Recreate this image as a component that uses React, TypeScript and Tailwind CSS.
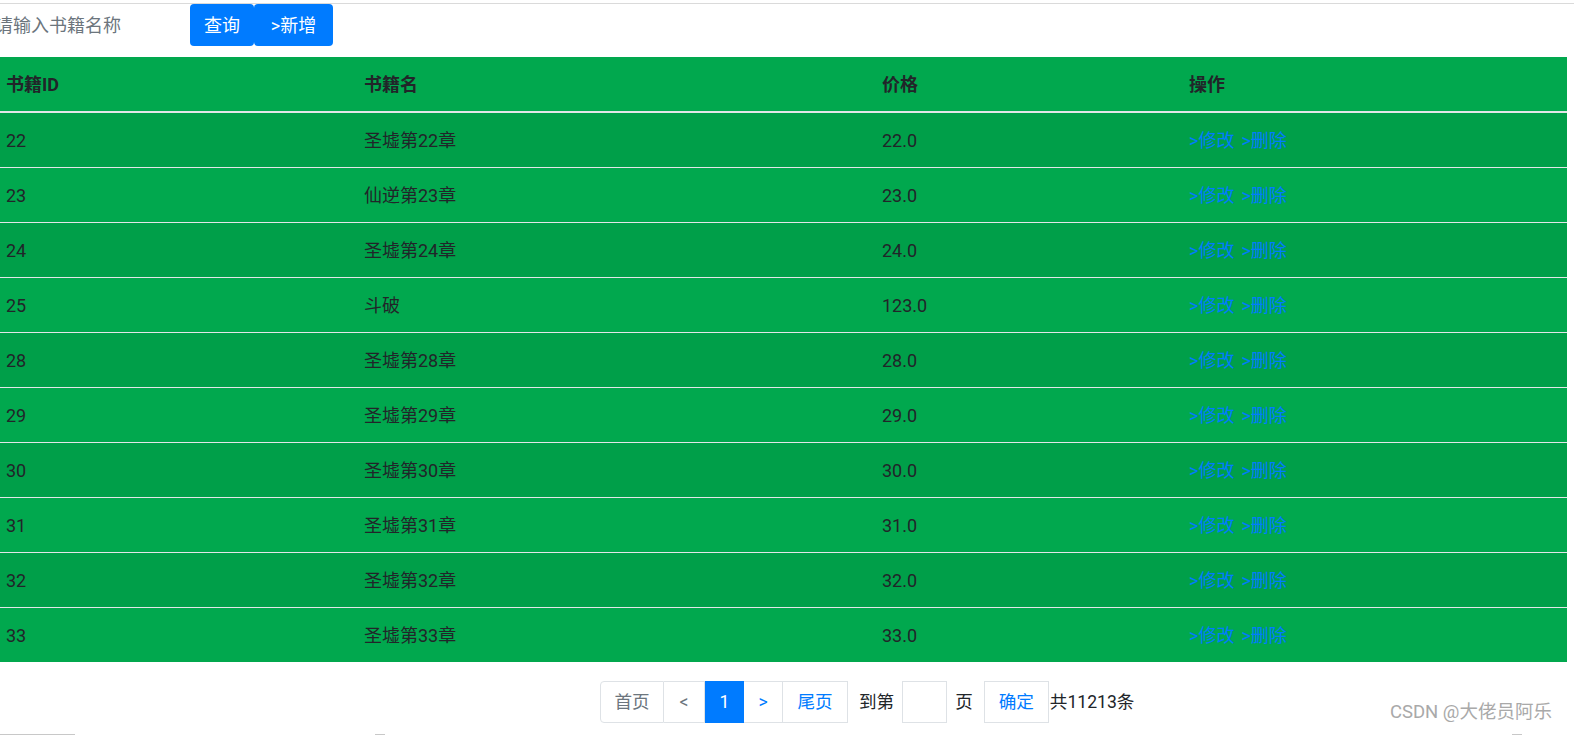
const rows = [
  { id: 22, name: '圣墟第22章', price: '22.0' },
  { id: 23, name: '仙逆第23章', price: '23.0' },
  { id: 24, name: '圣墟第24章', price: '24.0' },
  { id: 25, name: '斗破', price: '123.0' },
  { id: 28, name: '圣墟第28章', price: '28.0' },
  { id: 29, name: '圣墟第29章', price: '29.0' },
  { id: 30, name: '圣墟第30章', price: '30.0' },
  { id: 31, name: '圣墟第31章', price: '31.0' },
  { id: 32, name: '圣墟第32章', price: '32.0' },
  { id: 33, name: '圣墟第33章', price: '33.0' },
];

const font = "font-['Roboto','Noto_Sans_CJK_SC',sans-serif]";
const cols = 'grid grid-cols-[358px_518px_307px_384px] w-[1567px]';

export default function App() {
  return (
    <div className={`relative h-[735px] w-[1574px] overflow-hidden bg-white text-[18px] text-[#212529] ${font}`}>
      <div className="h-[3px]" />
      <div className="border-t border-[#dadada]" />

      {/* search bar */}
      <div className="flex h-[42px] items-stretch">
        <input
          placeholder="请输入书籍名称"
          className="ml-[-5px] w-[195px] border-0 bg-transparent p-0 text-[18px] outline-none placeholder:text-[#6c757d]"
        />
        <button className="w-[64px] rounded-[4px] bg-[#007bff] text-[18px] text-white">查询</button>
        <button className="w-[79px] rounded-[4px] bg-[#007bff] text-[18px] text-white">&gt;新增</button>
      </div>

      <div className="h-[11px]" />

      {/* table */}
      <div>
        <div className={`${cols} box-content h-[54px] items-center border-b-2 border-[#e3e6e8] bg-[#01a84e] font-bold`}>
          <div className="pl-[6px]">书籍ID</div>
          <div className="pl-[6px]">书籍名</div>
          <div className="pl-[6px]">价格</div>
          <div className="pl-[6px]">操作</div>
        </div>
        {rows.map((r, i) => (
          <div
            key={r.id}
            className={`${cols} box-content h-[54px] items-center ${i > 0 ? 'border-t border-[#e3e6e8]' : ''} ${
              i % 2 === 0 ? 'bg-[#009f49]' : 'bg-[#01a84e]'
            }`}
          >
            <div className="pl-[6px]">{r.id}</div>
            <div className="pl-[6px]">{r.name}</div>
            <div className="pl-[6px]">{r.price}</div>
            <div className="flex gap-[7px] pl-[6px] text-[#007bff]">
              <span>&gt;修改</span>
              <span>&gt;删除</span>
            </div>
          </div>
        ))}
      </div>

      {/* pagination */}
      <div className="mt-[19px] flex h-[42px] items-stretch pl-[600px] text-[17.6px]">
        <div className="flex">
          <div className="flex w-[64px] items-center justify-center rounded-l-[4px] border border-[#dee2e6] text-[#6c757d]">首页</div>
          <div className="flex w-[41px] items-center justify-center border border-l-0 border-[#dee2e6] text-[#6c757d]">&lt;</div>
          <div className="flex w-[39px] items-center justify-center bg-[#007bff] text-white">1</div>
          <div className="flex w-[39px] items-center justify-center border border-l-0 border-[#dee2e6] text-[#007bff]">&gt;</div>
          <div className="flex w-[65px] items-center justify-center border border-l-0 border-[#dee2e6] text-[#007bff]">尾页</div>
        </div>
        <div className="ml-[11px] flex items-center">到第</div>
        <div className="ml-[8px] w-[45px] border border-[#dee2e6]" />
        <div className="ml-[8px] flex items-center">页</div>
        <div className="ml-[11px] flex w-[65px] items-center justify-center border border-[#dee2e6] text-[#007bff]">确定</div>
        <div className="ml-[1px] flex items-center">共11213条</div>
      </div>

      <div className="pointer-events-none absolute right-[22px] bottom-[8px] text-[18.5px] text-[#a9a9a9]">CSDN @大佬员阿乐</div>
      <div className="absolute bottom-0 left-0 h-[1px] w-[75px] bg-[#c8c8c8]" />
      <div className="absolute bottom-0 left-[375px] h-[1px] w-[10px] bg-[#c8c8c8]" />
      <div className="absolute bottom-0 left-[1512px] h-[1px] w-[10px] bg-[#c8c8c8]" />
    </div>
  );
}
